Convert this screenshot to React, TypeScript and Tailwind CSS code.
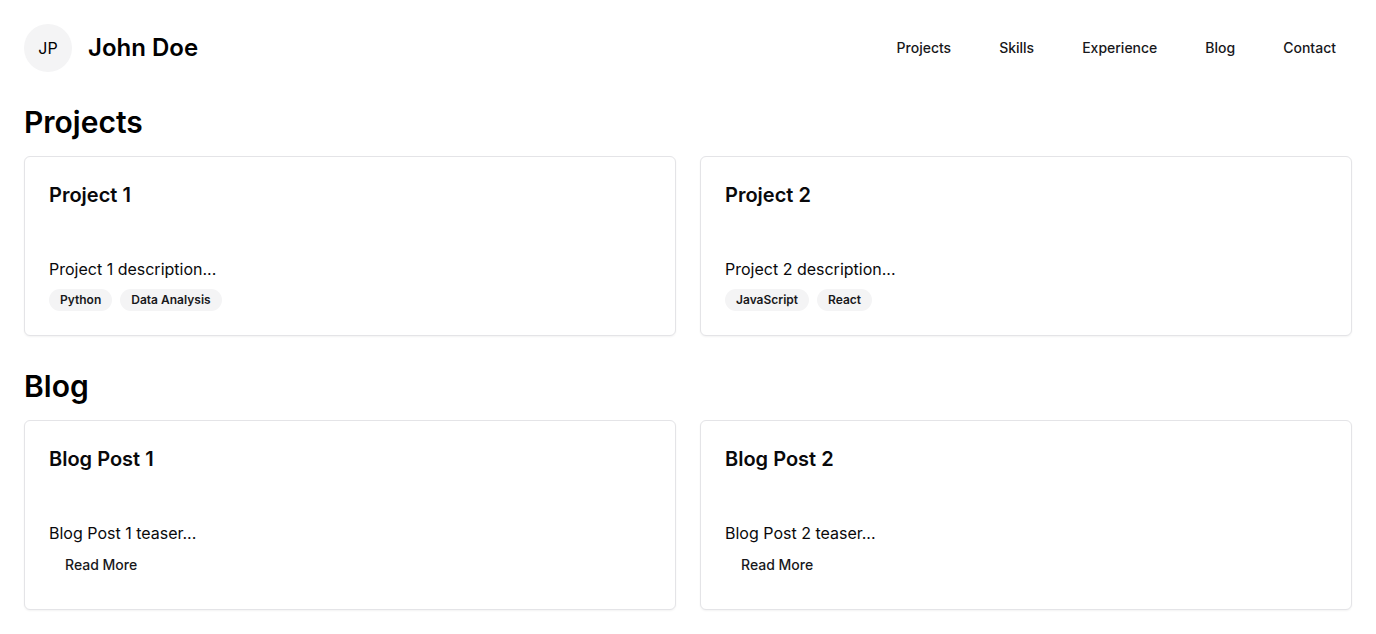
import type { ReactNode } from "react";

const navItems = ["Projects", "Skills", "Experience", "Blog", "Contact"];

const projects = [
  { title: "Project 1", text: "Project 1 description...", tags: ["Python", "Data Analysis"] },
  { title: "Project 2", text: "Project 2 description...", tags: ["JavaScript", "React"] },
];

const posts = [
  { title: "Blog Post 1", text: "Blog Post 1 teaser..." },
  { title: "Blog Post 2", text: "Blog Post 2 teaser..." },
];

function Card({ title, text, children }: { title: string; text: string; children: ReactNode }) {
  return (
    <article className="rounded-md border border-[#e4e4e7] bg-white text-[#09090b] shadow-xs">
      <div className="p-6">
        <h3 className="text-xl font-semibold">{title}</h3>
      </div>
      <div className="p-6">
        <p>{text}</p>
        {children}
      </div>
    </article>
  );
}

export default function App() {
  return (
    <div className="bg-white p-6 font-['Inter',sans-serif] text-black [font-optical-sizing:none]">
      <header className="flex items-center justify-between">
        <div className="flex items-center gap-4">
          <span className="flex size-12 items-center justify-center rounded-full bg-[#f4f4f5]">JP</span>
          <h1 className="text-2xl font-semibold">John Doe</h1>
        </div>
        <nav className="flex gap-4">
          {navItems.map((item) => (
            <a key={item} href={`#${item.toLowerCase()}`} className="flex h-10 items-center px-4 text-sm font-medium text-[#18181b]">
              {item}
            </a>
          ))}
        </nav>
      </header>
      <main>
        <section id="projects" className="mt-8">
          <h2 className="mb-4 text-3xl font-semibold">Projects</h2>
          <div className="grid grid-cols-2 gap-6">
            {projects.map((project) => (
              <Card key={project.title} title={project.title} text={project.text}>
                <div className="mt-2 flex gap-2">
                  {project.tags.map((tag) => (
                    <span key={tag} className="rounded-full border border-transparent bg-[#f4f4f5] px-2.5 py-0.5 text-xs font-semibold text-[#18181b]">
                      {tag}
                    </span>
                  ))}
                </div>
              </Card>
            ))}
          </div>
        </section>
        <section id="blog" className="mt-8">
          <h2 className="mb-4 text-3xl font-semibold">Blog</h2>
          <div className="grid grid-cols-2 gap-6">
            {posts.map((post) => (
              <Card key={post.title} title={post.title} text={post.text}>
                <button type="button" className="h-10 px-4 text-sm font-medium text-[#18181b]">
                  Read More
                </button>
              </Card>
            ))}
          </div>
        </section>
      </main>
    </div>
  );
}
